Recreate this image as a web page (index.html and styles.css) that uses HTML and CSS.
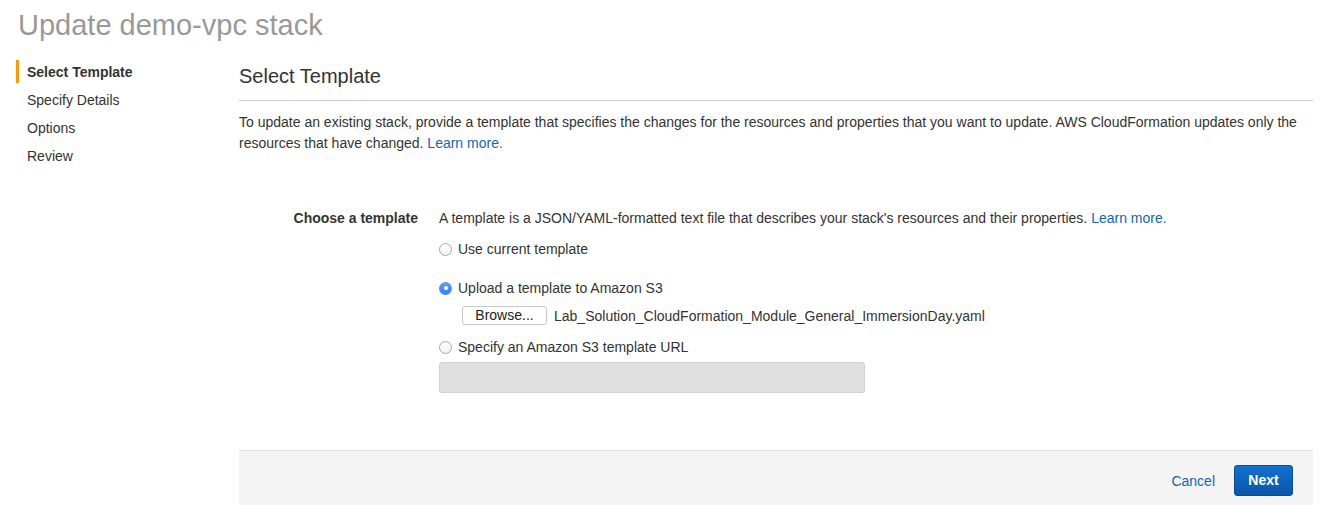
FILE: index.html
```html
<!DOCTYPE html>
<html>
<head>
<meta charset="utf-8">
<link rel="stylesheet" href="styles.css">
</head>
<body>
<h1 class="page-title">Update demo-vpc stack</h1>
<div class="layout">
  <nav class="steps">
    <div class="step active">Select Template</div>
    <div class="step">Specify Details</div>
    <div class="step">Options</div>
    <div class="step">Review</div>
  </nav>
  <main class="content">
    <h2 class="section-title">Select Template</h2>
    <p class="intro">To update an existing stack, provide a template that specifies the changes for the resources and properties that you want to update. AWS CloudFormation updates only the resources that have changed. <a class="link" href="#">Learn more.</a></p>
    <div class="form-row">
      <div class="form-label">Choose a template</div>
      <div class="form-field">
        <div class="help">A template is a JSON/YAML-formatted text file that describes your stack's resources and their properties. <a class="link" href="#">Learn more.</a></div>
        <label class="radio radio-1"><span class="dot"></span>Use current template</label>
        <label class="radio radio-2"><span class="dot checked"></span>Upload a template to Amazon S3</label>
        <div class="file-row"><span class="browse">Browse...</span><span class="filename">Lab_Solution_CloudFormation_Module_General_ImmersionDay.yaml</span></div>
        <label class="radio radio-3"><span class="dot"></span>Specify an Amazon S3 template URL</label>
        <div class="url-input"></div>
      </div>
    </div>
    <div class="footer">
      <a class="cancel" href="#">Cancel</a>
      <span class="next">Next</span>
    </div>
  </main>
</div>
</body>
</html>
```
FILE: styles.css
```css
html, body {
  margin: 0;
  padding: 0;
  background: #fff;
}
body {
  font-family: "Liberation Sans", Arial, sans-serif;
  font-size: 14px;
  color: #333;
  width: 1326px;
  height: 505px;
  overflow: hidden;
}
.page-title {
  margin: 0;
  padding: 7px 0 0 18px;
  height: 39px;
  font-size: 29px;
  font-weight: normal;
  color: #999;
  line-height: 36px;
}
.layout {
  display: flex;
  padding-top: 14px;
}
.steps {
  width: 239px;
  flex: none;
}
.step {
  height: 28px;
  line-height: 24px;
  padding-left: 27px;
  color: #333;
}
.step.active {
  font-weight: bold;
  border-left: 3px solid #f90;
  margin-left: 16px;
  padding-left: 8px;
  height: 23px;
  margin-bottom: 5px;
}
.content {
  width: 1074px;
  flex: none;
}
.section-title {
  margin: 0;
  font-size: 20px;
  font-weight: normal;
  color: #333;
  line-height: 32px;
  padding-bottom: 8px;
  border-bottom: 1px solid #ccc;
}
.intro {
  margin: 11px 0 0 0;
  line-height: 21px;
}
.link {
  color: #1166bb;
  text-decoration: none;
}
.form-row {
  display: flex;
  margin-top: 54px;
}
.form-label {
  width: 179px;
  text-align: right;
  font-weight: bold;
  line-height: 20px;
  flex: none;
}
.form-field {
  margin-left: 21px;
  display: flex;
  flex-direction: column;
}
.help {
  line-height: 20px;
}
.radio {
  display: flex;
  align-items: center;
  line-height: 20px;
}
.radio-1 { margin-top: 11px; }
.radio-2 { margin-top: 19px; }
.radio-3 { margin-top: 12px; }
.dot {
  width: 13px;
  height: 13px;
  border: 1px solid #a8a8a8;
  border-radius: 50%;
  box-sizing: border-box;
  margin-right: 6px;
  background: linear-gradient(#fff, #f2f2f2);
  position: relative;
}
.dot.checked {
  border: none;
  background: linear-gradient(#5aa2f5, #2f83ea);
}
.dot.checked::after {
  content: "";
  position: absolute;
  left: 4.5px;
  top: 4.5px;
  width: 4px;
  height: 4px;
  border-radius: 50%;
  background: #fff;
}
.file-row {
  display: flex;
  align-items: center;
  margin-top: 8px;
  padding-left: 23px;
}
.browse {
  display: inline-block;
  width: 85px;
  height: 19px;
  box-sizing: border-box;
  border: 1px solid #c8c8c8;
  border-radius: 3px;
  background: #fff;
  text-align: center;
  line-height: 17px;
  font-size: 14px;
  color: #222;
}
.filename {
  margin-left: 7px;
}
.url-input {
  margin-top: 5px;
  width: 426px;
  height: 31px;
  box-sizing: border-box;
  background: #e0e0e0;
  border: 1px solid #d2d2d2;
  border-radius: 3px;
}
.footer {
  margin-top: 57px;
  height: 60px;
  background: #f4f4f4;
  border-top: 1px solid #e0e0e0;
  display: flex;
  align-items: flex-start;
  justify-content: flex-end;
  padding-top: 14px;
  padding-right: 20px;
  box-sizing: border-box;
}
.cancel {
  color: #1166bb;
  text-decoration: none;
  line-height: 32px;
  margin-right: 19px;
}
.next {
  display: inline-block;
  width: 59px;
  height: 31px;
  box-sizing: border-box;
  border: 1px solid #0a4c95;
  border-radius: 3px;
  background: linear-gradient(#1271cf, #0a55a8);
  color: #fff;
  font-weight: bold;
  text-align: center;
  line-height: 29px;
}
```
